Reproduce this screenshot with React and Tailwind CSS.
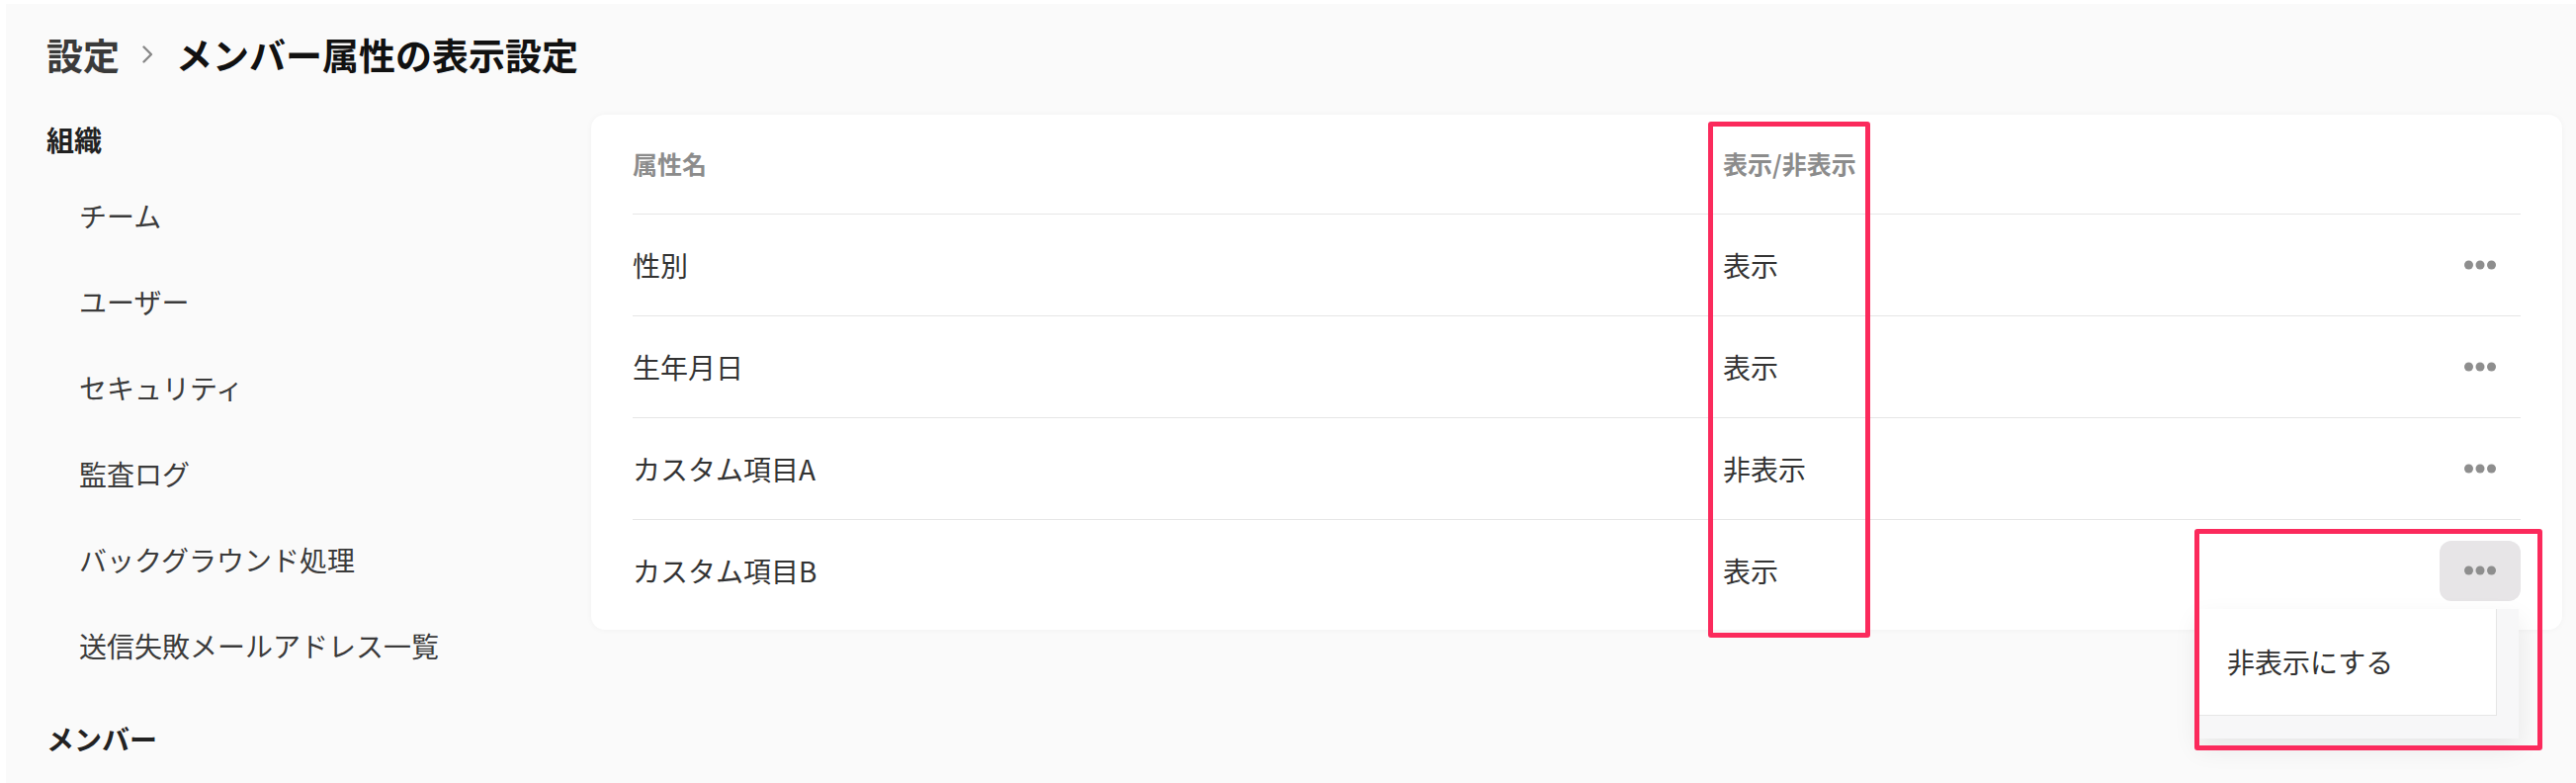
import React from "react";

const font = { fontFamily: '"Noto Sans CJK JP", "Noto Sans", sans-serif' };

const orgItems = ["チーム", "ユーザー", "セキュリティ", "監査ログ", "バックグラウンド処理", "送信失敗メールアドレス一覧"];

const rows = [
  { name: "性別", visible: "表示" },
  { name: "生年月日", visible: "表示" },
  { name: "カスタム項目A", visible: "非表示" },
  { name: "カスタム項目B", visible: "表示", open: true },
];

function Dots() {
  return (
    <svg width="32" height="10" viewBox="0 0 32 10">
      <circle cx="4.5" cy="5" r="4.5" fill="#8e8e8e" />
      <circle cx="16" cy="5" r="4.5" fill="#8e8e8e" />
      <circle cx="27.5" cy="5" r="4.5" fill="#8e8e8e" />
    </svg>
  );
}

function Chevron() {
  return (
    <svg width="13" height="22" viewBox="0 0 13 22" className="mx-[22px]">
      <path d="M2.5 3.5 L10 11 L2.5 18.5" fill="none" stroke="#888" strokeWidth="2.4" strokeLinecap="round" strokeLinejoin="round" />
    </svg>
  );
}

export default function App() {
  return (
    <div className="relative bg-white pt-[4px] pl-[6px] min-h-[792px]" style={font}>
      <div className="bg-[#fafafa] min-h-[788px] pt-[29px] pl-[41px] pr-[14px]">
        <h1 className="flex items-center h-[44px] text-[37px] font-bold leading-[44px]">
          <span className="text-[#3a3a3a]">設定</span>
          <Chevron />
          <span className="text-[#111]">メンバー属性の表示設定</span>
        </h1>

        <div className="flex mt-[39px]">
          <nav className="w-[551px] shrink-0">
            <div className="h-[50px] leading-[50px] text-[28px] font-bold text-[#222]">組織</div>
            <ul className="mt-[8px]">
              {orgItems.map((item) => (
                <li key={item} className="h-[87px] flex items-center pl-[33px] text-[28px] text-[#3b3b3b]">
                  {item}
                </li>
              ))}
            </ul>
            <div className="mt-[26px] h-[50px] leading-[50px] text-[28px] font-bold text-[#222]">メンバー</div>
          </nav>

          <div className="flex-1 self-start bg-white rounded-[14px] shadow-[0_0_6px_rgba(0,0,0,0.04)] px-[42px] pb-[9px]">
            <div className="flex items-center h-[101px] border-b border-[#e6e6e6] text-[25px] font-bold text-[#8c8c8c]">
              <div className="w-[1103px]">属性名</div>
              <div className="flex-1">表示/非表示</div>
            </div>
            {rows.map((row, i) => (
              <div
                key={row.name}
                className={i < rows.length - 1 ? "flex items-center h-[103px] border-b border-[#e6e6e6] text-[28px] text-[#333]" : "flex items-center h-[102px] text-[28px] text-[#333]"}
              >
                <div className="w-[1103px]">{row.name}</div>
                <div className="flex-1">{row.visible}</div>
                <div className="relative">
                  <button className={row.open ? "w-[82px] h-[61px] rounded-[12px] bg-[#e7e5e7] flex items-center justify-center" : "w-[82px] h-[61px] rounded-[12px] flex items-center justify-center"}>
                    <Dots />
                  </button>
                  {row.open && (
                    <div className="absolute right-[2px] top-[69px] w-[325px] h-[131px] bg-[#f7f7f8] shadow-[0_10px_24px_rgba(0,0,0,0.08)] z-10">
                      <div className="w-[303px] h-[108px] bg-white border-r border-b border-[#e6e6e6] flex items-center pl-[30px] text-[28px] text-[#333]">
                        非表示にする
                      </div>
                    </div>
                  )}
                </div>
              </div>
            ))}
          </div>
        </div>
      </div>

      <div className="absolute left-[1728px] top-[123px] w-[164px] h-[522px] border-[5px] border-[#fb2a5c] rounded-[3px] z-20" />
      <div className="absolute left-[2220px] top-[535px] w-[352px] h-[224px] border-[5px] border-[#fb2a5c] rounded-[3px] z-20" />
    </div>
  );
}
